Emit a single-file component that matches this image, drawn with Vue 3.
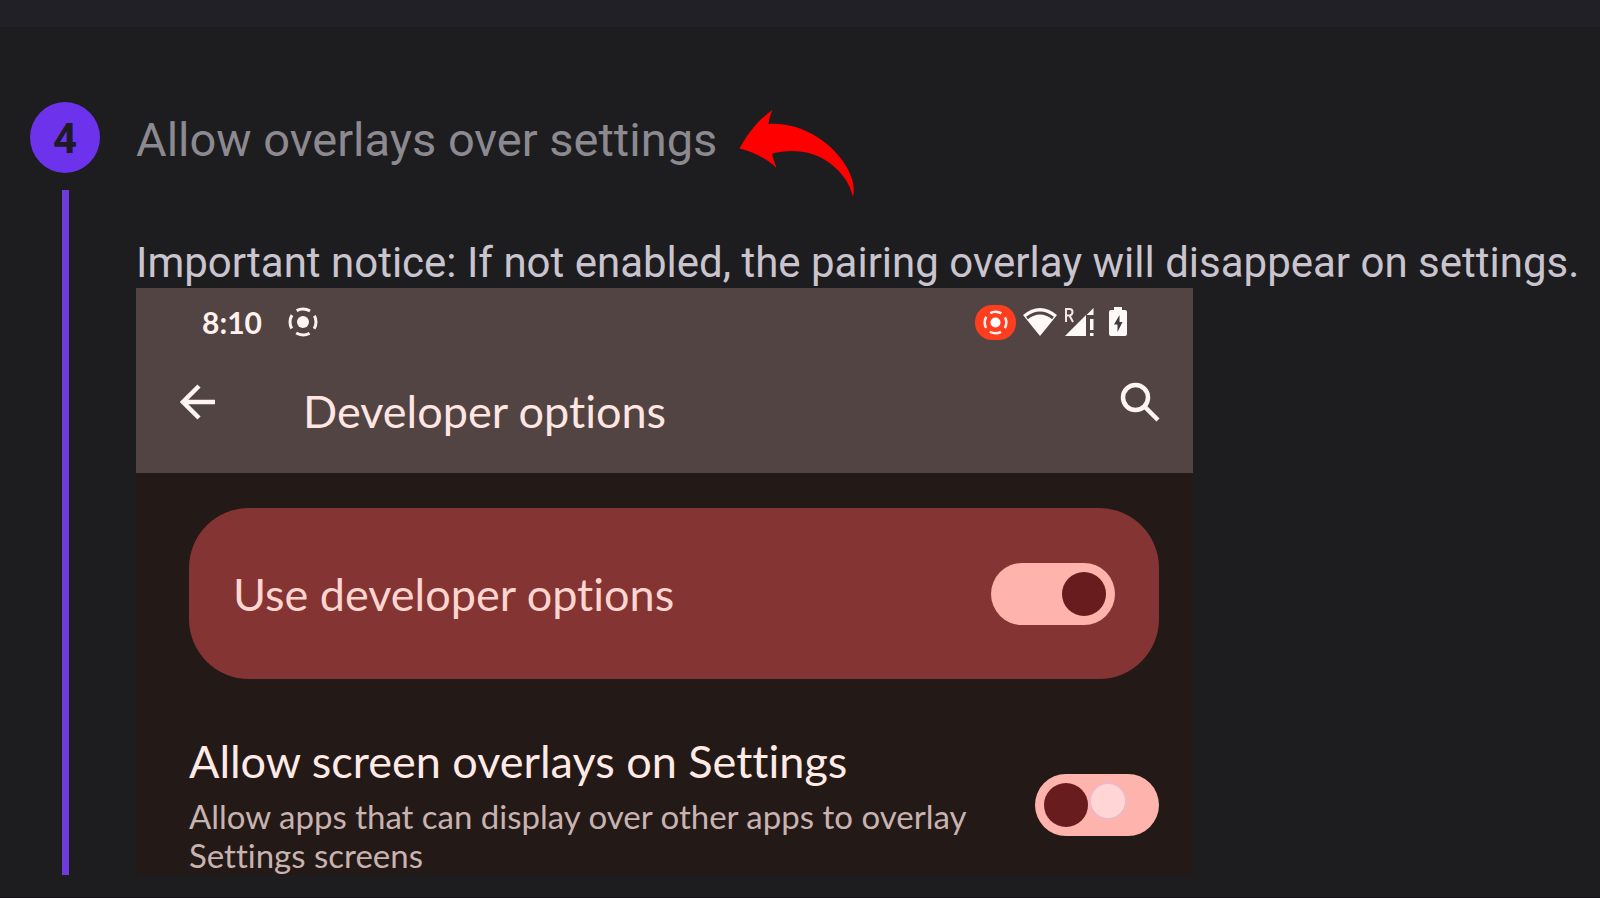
<script setup>
import { ref } from 'vue'

const developerOptions = ref(true)
const screenOverlays = ref(true)
</script>

<template>
  <div class="page">
    <header class="topbar"></header>
    <main class="step">
      <div class="rail">
        <div class="badge">4</div>
        <div class="line"></div>
      </div>
      <section class="content">
        <div class="heading">
          <h1>Allow overlays over settings</h1>
          <svg class="pointer" viewBox="0 0 116 88" aria-hidden="true">
            <path
              fill="#ff0000"
              d="M0.500 38.500C9 23 20 9 33.500 0C31.500 5 30 9 29.500 14C64 12 94 34 107 56C114 68 116 78 114 87C111 73 102 62 92 54C74 40 52 39 33 43.500C34 49 36 53 37.500 58C27 48 14 42 0.500 38.500Z"
            />
          </svg>
        </div>
        <p class="notice">Important notice: If not enabled, the pairing overlay will disappear on settings.</p>

        <div class="phone">
          <div class="phone-head">
            <div class="status">
              <span class="clock">8:10</span>
              <svg class="cast" viewBox="0 0 30 30" aria-hidden="true">
                <circle cx="15" cy="15" r="6" fill="#fff6f4" />
                <circle class="ring" cx="15" cy="15" r="13" />
              </svg>
              <div class="status-right">
                <span class="rec">
                  <svg viewBox="0 0 30 30" aria-hidden="true">
                    <circle cx="15" cy="15" r="6" fill="#ffffff" />
                    <circle class="ring" cx="15" cy="15" r="13" />
                  </svg>
                </span>
                <svg class="wifi" viewBox="0 0 34 30" aria-hidden="true">
                  <path fill="#fffaf8" d="M0 8Q17-6 34 8L17 29Z" />
                  <path fill="none" stroke="#524442" stroke-width="3" d="M4 11Q17 1 30 11" />
                </svg>
                <svg class="signal" viewBox="0 0 30 30" aria-hidden="true">
                  <path fill="#fffaf8" d="M1 29L22 8V29ZM29.500 1V8H22.500ZM26 12H29.500V23H26ZM26 26H29.500V29H26Z" />
                  <path fill="none" stroke="#f4e8e6" stroke-width="2" d="M2 15V2H5.500Q8.500 2 8.500 5T5.500 8.500H2M5.500 8.500L9 15" />
                </svg>
                <svg class="battery" viewBox="0 0 20 30" aria-hidden="true">
                  <path fill="#fffaf8" d="M6 0H14V3H17Q19 3 19 5V27Q19 29 17 29H3Q1 29 1 27V5Q1 3 3 3H6Z" />
                  <path fill="#3f3a3c" d="M11.500 8L6 17.500H9.500V25L14.500 15H11.500Z" />
                </svg>
              </div>
            </div>
            <div class="appbar">
              <button type="button" aria-label="Back">
                <svg viewBox="0 0 36 36" aria-hidden="true">
                  <path d="M35 18H3M19 2L3 18L19 34" />
                </svg>
              </button>
              <h2>Developer options</h2>
              <button type="button" aria-label="Search">
                <svg class="search" viewBox="0 0 40 40" aria-hidden="true">
                  <circle cx="15.500" cy="15.500" r="12.500" />
                  <path d="M24 24L38 38" />
                </svg>
              </button>
            </div>
          </div>

          <div class="card">
            <label for="developer">Use developer options</label>
            <span class="switch">
              <input id="developer" v-model="developerOptions" type="checkbox" role="switch" />
            </span>
          </div>

          <div class="row">
            <div class="row-text">
              <label for="overlays">Allow screen overlays on Settings</label>
              <p id="overlays-hint">Allow apps that can display over other apps to overlay Settings screens</p>
            </div>
            <span class="switch">
              <input
                id="overlays"
                v-model="screenOverlays"
                class="moving"
                type="checkbox"
                role="switch"
                aria-describedby="overlays-hint"
              />
              <span class="touch"></span>
            </span>
          </div>
        </div>
      </section>
    </main>
  </div>
</template>

<style>
body {
  background: #1d1d1f;
}
</style>

<style scoped>
* {
  box-sizing: border-box;
}
h1,
h2,
p {
  margin: 0;
  font-weight: 400;
}
.page {
  min-height: 100vh;
  display: flex;
  flex-direction: column;
  border-bottom: 1px solid #151217;
  background: #1d1d1f;
  font-family: Roboto, "Liberation Sans", sans-serif;
}
.topbar {
  height: 27px;
  flex: none;
  background: #212026;
}
.step {
  display: flex;
  gap: 36px;
  padding: 75px 16px 22px 30px;
}
.rail {
  flex: none;
  display: flex;
  flex-direction: column;
  align-items: center;
  gap: 17px;
}
.badge {
  width: 70px;
  height: 71px;
  border-radius: 50%;
  background: #6d33ec;
  color: #1d1b26;
  font-size: 42px;
  font-weight: 700;
  line-height: 74px;
  text-align: center;
}
.line {
  flex: 1;
  width: 7px;
  background: #6f3bdd;
}
.content {
  flex: 1;
  min-width: 0;
  padding-top: 8px;
}
.heading {
  display: flex;
  align-items: flex-start;
  gap: 22px;
}
h1 {
  color: #8c8a90;
  font-size: 47px;
  line-height: 60px;
}
.pointer {
  flex: none;
  width: 116px;
  height: 88px;
}
.notice {
  margin-top: 40px;
  color: #cac4cf;
  font-size: 42px;
  line-height: 50px;
}
.phone {
  width: 73%;
  background: #231917;
  font-family: Lato, "Open Sans", sans-serif;
  font-variant-ligatures: none;
}
.phone-head {
  height: 185px;
  background: #524442;
}
.status {
  display: flex;
  align-items: center;
  padding: 16px 65px 0 66px;
}
.clock {
  color: #fff1ee;
  font-size: 30px;
  line-height: 36px;
  font-weight: 700;
}
.cast {
  width: 30px;
  height: 30px;
  margin-left: 26px;
}
.ring {
  fill: none;
  stroke: #fff1ee;
  stroke-width: 3;
  stroke-dasharray: 14 6.420;
  stroke-dashoffset: 7;
}
.status-right {
  display: flex;
  align-items: center;
  gap: 7px;
  margin-left: auto;
}
.rec {
  display: flex;
  align-items: center;
  justify-content: center;
  width: 41px;
  height: 35px;
  border-radius: 17px;
  background: #ff3d1f;
}
.rec svg {
  width: 25px;
  height: 25px;
}
.wifi {
  width: 34px;
  height: 30px;
}
.signal {
  width: 30px;
  height: 30px;
}
.battery {
  width: 20px;
  height: 30px;
  margin-left: 7px;
}
.appbar {
  display: flex;
  padding: 36px 27px 0 36px;
}
.appbar button {
  display: flex;
  align-items: center;
  justify-content: center;
  width: 52px;
  height: 52px;
  padding: 0;
  border: 0;
  background: none;
}
.appbar svg {
  width: 36px;
  height: 36px;
  fill: none;
  stroke: #fff6f4;
  stroke-width: 4.500;
}
.appbar .search {
  width: 40px;
  height: 40px;
}
h2 {
  flex: 1;
  margin-left: 79px;
  padding-top: 7px;
  color: #ffe6e2;
  font-size: 45px;
  line-height: 56px;
}
.card {
  display: flex;
  align-items: center;
  justify-content: space-between;
  min-height: 171px;
  margin: 35px 34px 0 53px;
  padding: 0 44px;
  border-radius: 60px;
  background: #833433;
}
.card label {
  color: #ffd5d0;
  font-size: 45px;
  line-height: 56px;
}
.row {
  display: flex;
  align-items: flex-start;
  justify-content: space-between;
  margin: 52px 34px 0 53px;
}
.row-text {
  max-width: 800px;
}
.row label {
  display: block;
  color: #ffeae6;
  font-size: 45px;
  line-height: 60px;
}
.row p {
  margin-top: 6px;
  color: #c9b3b0;
  font-size: 33px;
  line-height: 39px;
}
.switch {
  position: relative;
  flex: none;
  display: flex;
}
.row .switch {
  margin-top: 43px;
}
.switch input {
  appearance: none;
  display: flex;
  align-items: center;
  width: 124px;
  height: 62px;
  margin: 0;
  padding: 0 9px;
  border-radius: 31px;
  background: #ffb3ad;
}
.switch input::before {
  content: "";
  width: 44px;
  height: 44px;
  border-radius: 50%;
  background: #681c1e;
}
.switch input:checked {
  justify-content: flex-end;
}
.switch input.moving {
  justify-content: flex-start;
}
.touch {
  position: absolute;
  top: 8px;
  left: 54px;
  width: 38px;
  height: 38px;
  border: 2px solid #ecb9c8;
  border-radius: 50%;
  background: #ffd6d3;
  pointer-events: none;
}
</style>
